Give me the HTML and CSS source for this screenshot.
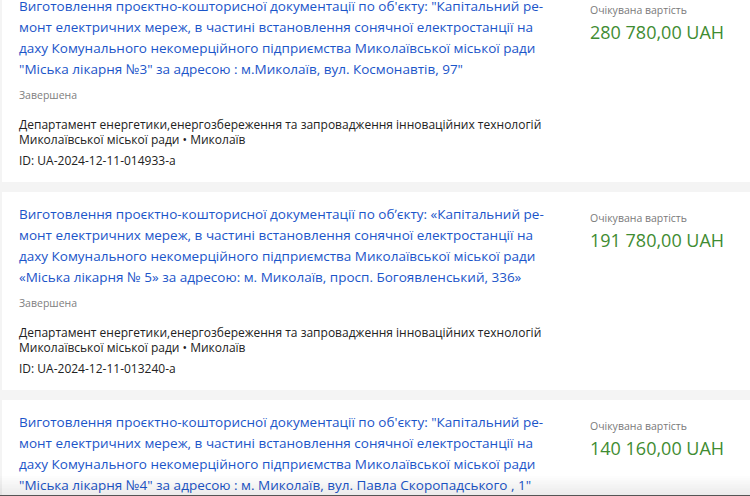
FILE: index.html
```html
<!DOCTYPE html>
<html lang="uk">
<head>
  <meta charset="UTF-8">
  <meta name="viewport" content="width=device-width, initial-scale=1.0">
  <title>Закупівлі</title>
  <link rel="stylesheet" href="styles.css">
</head>
<body>

<div class="tender-list">

  <div class="tender">
    <div class="tender-main">
      <a class="tender-title" href="#">Виготовлення проєктно-кошторисної документації по об'єкту: "Капітальний ре&shy;монт електричних мереж, в частині встановлення сонячної електростанції на даху Комунального некомерційного підприємства Миколаївської міської ради "Міська лікарня №3" за адресою : м.Миколаїв, вул. Космонавтів, 97"</a>
      <div class="tender-status">Завершена</div>
      <div class="tender-buyer">Департамент енергетики,енергозбереження та запровадження інноваційних технологій Миколаївської міської ради • Миколаїв</div>
      <div class="tender-id">ID: UA-2024-12-11-014933-a</div>
    </div>
    <div class="tender-side">
      <div class="price-label">Очікувана вартість</div>
      <div class="price">280 780,00 UAH</div>
    </div>
  </div>

  <div class="tender">
    <div class="tender-main">
      <a class="tender-title" href="#">Виготовлення проєктно-кошторисної документації по обʼєкту: «Капітальний ре&shy;монт електричних мереж, в частині встановлення сонячної електростанції на даху Комунального некомерційного підприємства Миколаївської міської ради «Міська лікарня № 5» за адресою: м. Миколаїв, просп. Богоявленський, 336»</a>
      <div class="tender-status">Завершена</div>
      <div class="tender-buyer">Департамент енергетики,енергозбереження та запровадження інноваційних технологій Миколаївської міської ради • Миколаїв</div>
      <div class="tender-id">ID: UA-2024-12-11-013240-a</div>
    </div>
    <div class="tender-side">
      <div class="price-label">Очікувана вартість</div>
      <div class="price">191 780,00 UAH</div>
    </div>
  </div>

  <div class="tender">
    <div class="tender-main">
      <a class="tender-title" href="#">Виготовлення проєктно-кошторисної документації по об'єкту: "Капітальний ре&shy;монт електричних мереж, в частині встановлення сонячної електростанції на даху Комунального некомерційного підприємства Миколаївської міської ради "Міська лікарня №4" за адресою : м. Миколаїв, вул. Павла Скоропадського , 1"</a>
      <div class="tender-status">Завершена</div>
      <div class="tender-buyer">Департамент енергетики,енергозбереження та запровадження інноваційних технологій Миколаївської міської ради • Миколаїв</div>
      <div class="tender-id">ID: UA-2024-12-11-012871-a</div>
    </div>
    <div class="tender-side">
      <div class="price-label">Очікувана вартість</div>
      <div class="price">140 160,00 UAH</div>
    </div>
  </div>

</div>

<div class="bottom-fade"></div>

</body>
</html>
```

FILE: styles.css
```css
body {
  font-family: "Open Sans", "Noto Sans", sans-serif;
  background-color: #f4f4f4;
  margin: 0;
  padding: 0;
  color: #222;
  overflow: hidden;
  height: 496px;
}

.tender-list {
  margin-top: -16px;
  padding-left: 2px;
}

.tender {
  background-color: #fff;
  display: flex;
  padding: 12px 0 14px 17px;
  margin-bottom: 10px;
}

.tender-main {
  width: 540px;
  flex-shrink: 0;
}

.tender-title {
  display: block;
  color: #1b55c9;
  text-decoration: none;
  font-size: 13.5px;
  line-height: 21px;
  hyphens: manual;
}

.tender-status {
  margin-top: 7px;
  font-size: 10.5px;
  line-height: 16px;
  color: #808080;
}

.tender-buyer {
  margin-top: 14px;
  font-size: 12px;
  line-height: 15px;
}

.tender-id {
  margin-top: 6px;
  font-size: 12px;
  line-height: 15px;
}

.tender-side {
  margin-left: 31px;
  padding-top: 6px;
}

.price-label {
  font-size: 10.5px;
  line-height: 16px;
  color: #7a7a7a;
}

.price {
  margin-top: 2px;
  font-size: 18px;
  line-height: 24px;
  color: #3f8c32;
}

.bottom-fade {
  position: fixed;
  left: 0;
  right: 0;
  bottom: 0;
  height: 20px;
  background: linear-gradient(to bottom, rgba(0, 0, 0, 0), rgba(0, 0, 0, 0.08));
  border-bottom: 1px solid #555;
}
```
